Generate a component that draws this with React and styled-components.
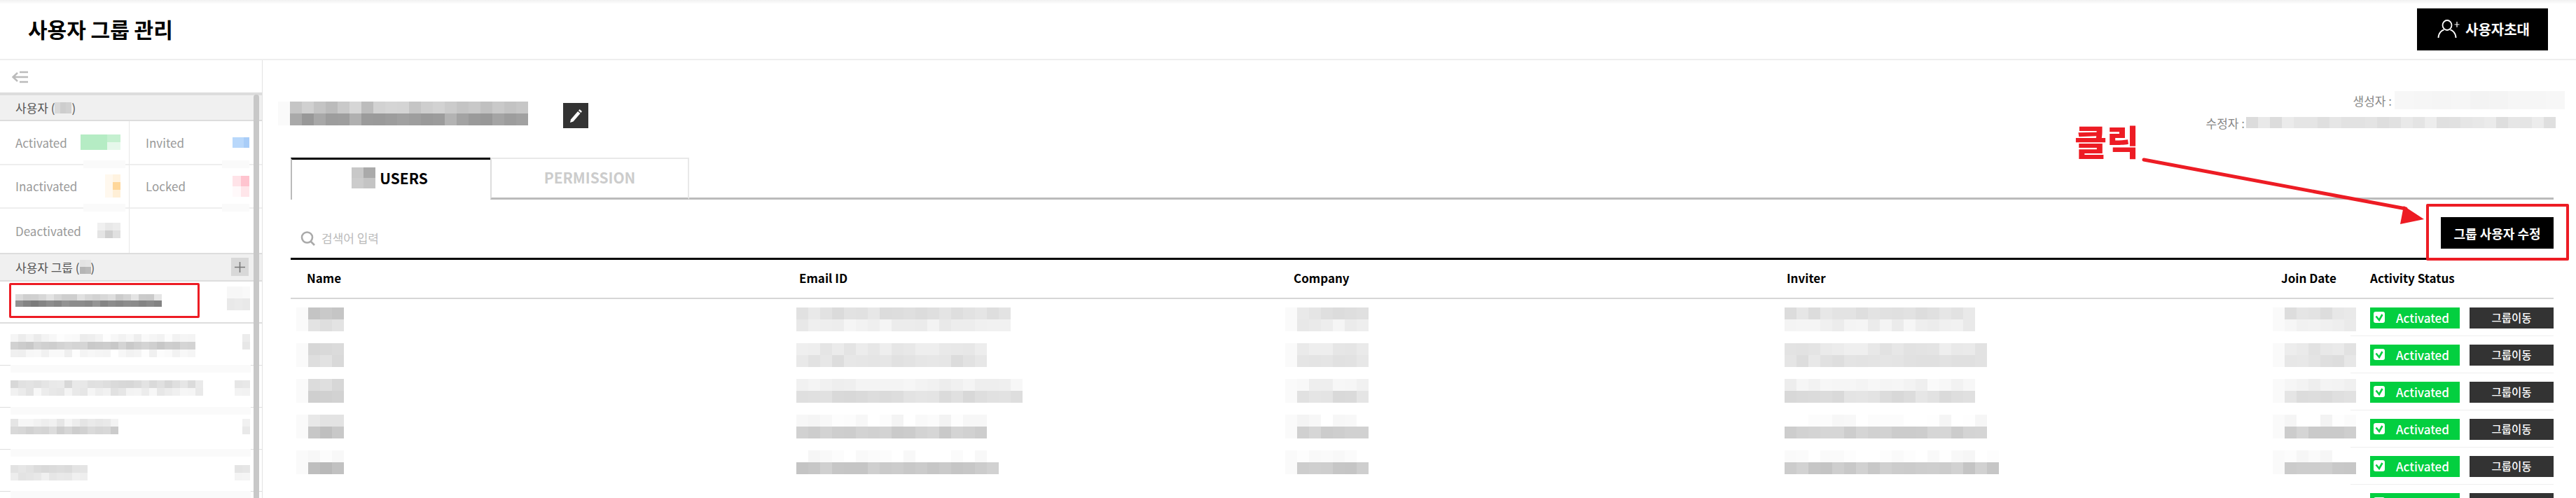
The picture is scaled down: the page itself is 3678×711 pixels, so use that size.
import React from "react";
import styled, { createGlobalStyle } from "styled-components";

const Global = createGlobalStyle`
  html, body { margin: 0; padding: 0; background: #fff; }
  * { box-sizing: border-box; }
  body { font-family: "Noto Sans CJK KR", "Noto Sans", sans-serif; }
`;

const Page = styled.div`
  position: relative; width: 3678px; height: 711px; overflow: hidden;
  display: flex; flex-direction: column; background: #fff; color: #000;
`;
const TopBar = styled.header`
  flex: none; height: 86px; display: flex; align-items: center; justify-content: space-between;
  padding: 0 40px 0 40px; border-bottom: 2px solid #eee;
  background: linear-gradient(#f1f1f1 0, #fff 6px);
`;
const PageTitle = styled.h1`
  margin: 0 0 3px; font-size: 30px; line-height: 40px; font-weight: 700; letter-spacing: 0;
`;
const InviteButton = styled.button`
  width: 187px; height: 60px; margin: -1px 0 0; border: 0; background: #000; color: #fff;
  font: 700 20px/1 "Noto Sans CJK KR", sans-serif; display: flex; align-items: center;
  justify-content: center; gap: 7px; padding: 0 0 0 3px;
`;
const Body = styled.div`flex: 1; display: flex; min-height: 0;`;
const Sidebar = styled.aside`
  position: relative; flex: none; width: 375px; border-right: 1px solid #e2e2e2; overflow: hidden;
`;
const ToggleRow = styled.div`height: 46px; padding: 14px 0 0 17px;`;
const Scrollbar = styled.div`
  position: absolute; left: 362px; top: 49px; bottom: 0; width: 8px; background: #c8c8c8; border-radius: 4px 4px 0 0;
`;
const SectionHead = styled.div`
  display: flex; align-items: center; justify-content: space-between; padding: 0 19px 0 22px;
  height: ${p => p.$h}px; background: #f0f0f0; color: #555; font-size: 17px;
  border-top: ${p => p.$top}px solid #ddd; border-bottom: 2px solid #ddd;
`;
const HeadLabel = styled.span`display: inline-flex; align-items: center;`;
const PlusBox = styled.span`
  width: 25px; height: 26px; background: #d8d8d8; color: #777; display: flex; align-items: center; justify-content: center;
`;
const StatGrid = styled.div`display: grid; grid-template-columns: 185px 189px; grid-auto-rows: 62.5px;`;
const Stat = styled.div`
  position: relative; display: flex; align-items: center; justify-content: space-between;
  padding: 0 ${p => p.$right ? 18 : 12}px 0 ${p => p.$right ? 23 : 22}px;
  border-bottom: ${p => p.$last ? 0 : 2}px solid #eee;
  border-right: ${p => p.$right ? 0 : 1}px solid #e8e8e8;
  color: #999; font-size: 17px;
`;
const Smudge = styled.i`
  position: absolute; left: ${p => p.$x}px; right: ${p => p.$r}px; bottom: ${p => p.$b}px; height: ${p => p.$h}px; background: #fafafa;
`;
const Item = styled.div`
  position: relative; height: ${p => p.$h}px; display: flex; justify-content: space-between; align-items: flex-start;
  padding: 0 17px 0 ${p => p.$l}px; border-bottom: ${p => p.$b}px solid #ddd;
`;
const ItemPart = styled.div`margin-top: ${p => p.$top}px;`;
const SelectBox = styled.div`
  position: absolute; left: 13px; top: 2px; width: 272px; height: 50px; border: 3px solid #ed1c24; border-radius: 2px;
`;
const Main = styled.main`flex: 1; min-width: 0; padding: 0 32px 0 40px;`;
const HeadRow = styled.div`height: 139px; padding-top: 44px; display: flex; justify-content: space-between; align-items: flex-start;`;
const TitleGroup = styled.div`display: flex; align-items: flex-start; gap: 50px; margin: 15px 0 0 -18px;`;
const EditButton = styled.span`
  width: 36px; height: 36px; margin-top: 2px; background: #333; display: flex; align-items: center; justify-content: center;
`;
const Meta = styled.div`display: flex; flex-direction: column; align-items: flex-end; margin-right: -16px; color: #888; font-size: 17px;`;
const MetaLine = styled.div`
  display: flex; align-items: center; height: ${p => p.$h}px; margin-top: ${p => p.$m}px; margin-right: ${p => p.$r}px; gap: ${p => p.$g}px;
`;
const TabBar = styled.div`display: flex; height: 60px;`;
const ActiveTab = styled.div`
  width: 285px; border-top: 3px solid #000; border-left: 2px solid #bbb; display: flex; align-items: center;
  justify-content: center; gap: 6px; font-size: 21px; font-weight: 700; padding-right: 4px; padding-bottom: 6px;
`;
const IdleTab = styled.div`
  width: 284px; border-top: 2px solid #e8e8e8; border-left: 2px solid #ddd; border-right: 2px solid #e8e8e8;
  border-bottom: 3px solid #bbb; display: flex; align-items: center; justify-content: center;
  color: #ccc; font-size: 21px; font-weight: 700; padding-bottom: 4px;
`;
const TabRest = styled.div`flex: 1; border-bottom: 3px solid #bbb;`;
const Toolbar = styled.div`height: 83px; padding-top: 25px; display: flex; justify-content: space-between; align-items: flex-start;`;
const Search = styled.div`display: flex; align-items: center; gap: 8px; padding: 18px 0 0 14px; color: #bbb; font-size: 17px; line-height: 24px;`;
const EditUsers = styled.button`
  width: 161px; height: 45px; border: 0; background: #000; color: #fff; padding: 0;
  font: 700 18px/1 "Noto Sans CJK KR", sans-serif;
`;
const TableHead = styled.div`
  height: 59px; padding: 0 0 3px 23px; border-top: 3px solid #000; border-bottom: 2px solid #d6d6d6;
  display: grid; grid-template-columns: 703px 706px 704px 706px 127px 262px; align-items: center;
  font-size: 17px; font-weight: 700;
`;
const TableBody = styled.div`display: flex;`;
const BlurGrid = styled.div`
  flex: none; width: 2941px; padding: 12px 0 0 8px;
  display: grid; grid-template-columns: 714px 698px 713px 697px 111px; grid-auto-rows: 51px;
`;
const StatusColumn = styled.div`flex: 1; display: flex; flex-direction: column;`;
const StatusRow = styled.div`
  flex: none; height: 53px; padding: 12px 0 10px 28px; border-bottom: 1px solid #eee; display: flex; justify-content: space-between;
`;
const Badge = styled.span`
  width: 128px; height: 30px; background: #03cf40; color: #fff; font-size: 17px; font-weight: 500;
  display: flex; align-items: center; gap: 16px; padding: 0 0 2px 5px;
`;
const MoveButton = styled.button`
  width: 120px; height: 30px; border: 0; padding: 0; background: #333; color: #fff;
  font: 500 15.5px/1 "Noto Sans CJK KR", sans-serif;
`;
const ClickNote = styled.div`
  position: absolute; left: 2962px; top: 165px; font-size: 50px; line-height: 70px; font-weight: 900; color: #ed1c24;
`;
const Arrow = styled.svg`position: absolute; left: 3050px; top: 220px;`;
const CalloutBox = styled.div`
  position: absolute; left: 3464px; top: 291px; width: 204px; height: 81px; border: 4px solid #ed1c24; border-radius: 2px;
`;
const MosaicSvg = styled.svg`display: block; flex: none;`;

const noise = s => { const x = Math.sin(s * 12.9898) * 43758.5453; return x - Math.floor(x); };
const gray = v => { const c = Math.max(0, Math.min(255, Math.round(v))); return `rgb(${c},${c},${c})`; };

function Mosaic({ cols, tones, colors, w = 17, h = 17, seed = 1, spread = 14, lead = false }) {
  const rows = colors ? colors.length : tones.length;
  const n = colors ? colors[0].length : cols;
  const rects = [];
  for (let r = 0; r < rows; r++) for (let c = 0; c < n; c++) {
    let fill;
    if (colors) fill = colors[r][c];
    else {
      let v = tones[r] + (noise(seed * 7 + r * 31 + c * 3.7) - 0.5) * spread;
      if (lead && c === 0) v = 250;
      fill = gray(v);
    }
    rects.push(<rect key={`${r}-${c}`} x={c * w} y={r * h} width={w} height={h} fill={fill} />);
  }
  return <MosaicSvg width={n * w} height={rows * h} shapeRendering="crispEdges">{rects}</MosaicSvg>;
}

const rowTones = [[0xe2, 0xef], [0xe8, 0xe3], [0xf4, 0xdf], [0xfa, 0xd0], [0xfc, 0xcb]];
const nameTones = [[0xca, 0xe4], [0xd8, 0xdc], [0xdc, 0xcc], [0xe4, 0xc4], [0xf6, 0xbc]];
const blurCols = [
  [4, 18, 7, 16, 7],
  [4, 16, 7, 17, 7],
  [4, 19, 7, 16, 7],
  [4, 16, 7, 17, 7],
  [4, 17, 7, 18, 7],
];
const statuses = [0, 1, 2, 3, 4, 5];

const ToggleIcon = () => (
  <svg width="23" height="18" viewBox="0 0 23 18" fill="none" stroke="#bbb" strokeWidth="2.4">
    <path d="M11 2h12M1 9h22M11 16h12M8 3 1.5 9 8 15" />
  </svg>
);
const UserPlus = () => (
  <svg width="33" height="27" viewBox="0 0 33 27" fill="none" stroke="#fff" strokeWidth="1.8">
    <ellipse cx="14" cy="8" rx="6.5" ry="7" />
    <path d="M1.5 26c0-7 5-11 8-11.500M26.500 26c0-7-5-11-8-11.500" />
    <path d="M28 3v8M24.500 7h7" strokeWidth="1.200" />
  </svg>
);
const Pencil = () => (
  <svg width="20" height="20" viewBox="0 0 20 20" fill="#fff">
    <path d="M3 15.500 13 4l3.500 3L6.500 18.500 2 20z" />
    <path d="M14 3l1.500-2 3.500 3-1.500 2z" />
  </svg>
);
const SearchIcon = () => (
  <svg width="22" height="21" viewBox="0 0 22 21" fill="none" stroke="#aaa" strokeWidth="2.600">
    <circle cx="9.500" cy="9" r="7.500" />
    <path d="m15 15 5 5" />
  </svg>
);
const CheckBadge = () => (
  <svg width="16" height="16" viewBox="0 0 16 16">
    <rect width="16" height="16" rx="3" fill="#fff" />
    <path d="M3.500 6.500 8 12l4.500-8" fill="none" stroke="#03cf40" strokeWidth="2.600" />
  </svg>
);
const PlusIcon = () => (
  <svg width="15" height="15" viewBox="0 0 15 15" stroke="#777" strokeWidth="1.600">
    <path d="M7.500 0v15M0 7.500h15" />
  </svg>
);

const sideItems = [
  { h: 60, b: 2, l: 22, top: 18, name: { cols: 19, tones: [0xd8, 0x88], w: 11, h: 9, seed: 3, spread: 30 }, ctop: 7, count: { cols: 3, tones: [0xf8, 0xea], w: 11, h: 17, seed: 4, spread: 3 } },
  { h: 60, b: 1, l: 15, top: 15, name: { cols: 24, tones: [0xf4, 0xcf, 0xf6], w: 11, h: 11, seed: 5, spread: 18 }, ctop: 15, count: { cols: 1, tones: [0xec, 0xe8], w: 11, h: 11, seed: 6, spread: 3 } },
  { h: 60, b: 1, l: 15, top: 21, name: { cols: 25, tones: [0xe0, 0xec], w: 11, h: 11, seed: 7, spread: 22 }, ctop: 21, count: { cols: 2, tones: [0xe6, 0xf4], w: 11, h: 11, seed: 8, spread: 5 } },
  { h: 60, b: 1, l: 15, top: 16, name: { cols: 14, tones: [0xee, 0xd4], w: 11, h: 11, seed: 9, spread: 18 }, ctop: 16, count: { cols: 1, tones: [0xf0, 0xe8], w: 11, h: 11, seed: 2, spread: 3 } },
  { h: 60, b: 1, l: 15, top: 22, name: { cols: 10, tones: [0xdf, 0xea], w: 11, h: 11, seed: 11, spread: 14 }, ctop: 22, count: { cols: 2, tones: [0xe6, 0xf4], w: 11, h: 11, seed: 12, spread: 4 } },
];

const G = "#b5ecc4", G2 = "#c5f0d0", G3 = "#e6f8eb", W = "#fff";
const stats = [
  { label: "Activated", colors: [[G, G, G2], [G, G, G3]], w: 19, h: 11 },
  { label: "Invited", right: true, colors: [["#b9d8fb", "#b9d8fb", "#a9cdf8"]], w: 8, h: 15 },
  { label: "Inactivated", colors: [["#fff8ee", "#fff3e0"], ["#fff8ee", "#ffd79a"], ["#fff8ee", "#ffefd6"]], w: 11, h: 11 },
  { label: "Locked", right: true, colors: [["#ffe3e8", "#ffc4cf"], ["#fff9fa", "#ffe6ea"]], w: 12, h: 15 },
  { label: "Deactivated", last: true, colors: [["#f0f0f0", "#e8e8e8", "#ececec"], ["#e4e4e4", "#cfcfcf", "#e0e0e0"]], w: 11, h: 11 },
  { label: "", right: true, last: true },
];

export default function App() {
  return (
    <Page>
      <Global />
      <TopBar>
        <PageTitle>사용자 그룹 관리</PageTitle>
        <InviteButton><UserPlus />사용자초대</InviteButton>
      </TopBar>
      <Body>
        <Sidebar>
          <ToggleRow><ToggleIcon /></ToggleRow>
          <SectionHead $h={41} $top={4}>
            <HeadLabel>사용자 (<Mosaic cols={3} tones={[0xd0]} w={8} h={16} seed={2} spread={30} />)</HeadLabel>
          </SectionHead>
          <StatGrid>
            {stats.map((s, i) => (
              <Stat key={i} $right={s.right} $last={s.last}>
                {s.label}
                {s.colors && <Mosaic colors={s.colors} w={s.w} h={s.h} />}
                {!s.last && <Smudge $x={s.right ? 132 : 119} $r={s.right ? 18 : 5} $b={-6} $h={11} />}
              </Stat>
            ))}
          </StatGrid>
          <SectionHead $h={41} $top={2}>
            <HeadLabel>사용자 그룹 (<Mosaic cols={2} tones={[0xe6, 0xb8]} w={8} h={10} seed={4} spread={8} />)</HeadLabel>
            <PlusBox><PlusIcon /></PlusBox>
          </SectionHead>
          {sideItems.map((it, i) => (
            <Item key={i} $h={it.h} $b={it.b} $l={it.l}>
              <ItemPart $top={it.top}><Mosaic {...it.name} /></ItemPart>
              <ItemPart $top={it.ctop}><Mosaic {...it.count} /></ItemPart>
              {i === 0 && <SelectBox />}
              {i > 0 && <Smudge $x={15} $r={16} $b={-11} $h={11} />}
            </Item>
          ))}
          <Scrollbar />
        </Sidebar>
        <Main>
          <HeadRow>
            <TitleGroup>
              <Mosaic cols={21} tones={[0xc8, 0xa6]} w={17} h={17} seed={13} spread={28} lead />
              <EditButton><Pencil /></EditButton>
            </TitleGroup>
            <Meta>
              <MetaLine $h={26} $m={0} $r={0} $g={4}>
                생성자 :<Mosaic cols={9} tones={[0xf5]} w={27} h={26} seed={15} spread={5} />
              </MetaLine>
              <MetaLine $h={16} $m={11} $r={13} $g={2}>
                수정자 :<Mosaic cols={26} tones={[0xe4]} w={17} h={16} seed={16} spread={18} />
              </MetaLine>
            </Meta>
          </HeadRow>
          <TabBar>
            <ActiveTab>
              <Mosaic colors={[["#c8c8c8", "#aaaaaa"], ["#cccccc", "#c4c4c4"]]} w={17} h={15} />
              USERS
            </ActiveTab>
            <IdleTab>PERMISSION</IdleTab>
            <TabRest />
          </TabBar>
          <Toolbar>
            <Search><SearchIcon />검색어 입력</Search>
            <EditUsers>그룹 사용자 수정</EditUsers>
          </Toolbar>
          <TableHead>
            <span>Name</span><span>Email ID</span><span>Company</span><span>Inviter</span><span>Join Date</span><span>Activity Status</span>
          </TableHead>
          <TableBody>
            <BlurGrid>
              {blurCols.map((cols, r) => cols.map((n, c) => (
                <Mosaic key={`${r}-${c}`} cols={n} tones={c === 0 ? nameTones[r] : rowTones[r]} seed={r * 11 + c * 5 + 1} spread={c === 0 ? 12 : 14} lead={c === 0 || c === 2 || c === 4} />
              )))}
            </BlurGrid>
            <StatusColumn>
              {statuses.map(i => (
                <StatusRow key={i}>
                  <Badge><CheckBadge />Activated</Badge>
                  <MoveButton>그룹이동</MoveButton>
                </StatusRow>
              ))}
            </StatusColumn>
          </TableBody>
        </Main>
      </Body>
      <ClickNote>클릭</ClickNote>
      <Arrow width="420" height="110" viewBox="0 0 420 110">
        <path d="M11 8 L392 84" fill="none" stroke="none" />
        <path d="M11 8 L390 82" fill="none" stroke="none" />
        <path d="M11 9 L392 84" fill="none" stroke="none" />
        <path d="M11 9 L385 81" fill="none" stroke="none" />
        <path d="M11 8 L385 78" fill="none" stroke="#ed1c24" strokeWidth="5" strokeLinecap="round" />
        <path d="M411 93 L382 74 L377 100 Z" fill="#ed1c24" />
      </Arrow>
      <CalloutBox />
    </Page>
  );
}
